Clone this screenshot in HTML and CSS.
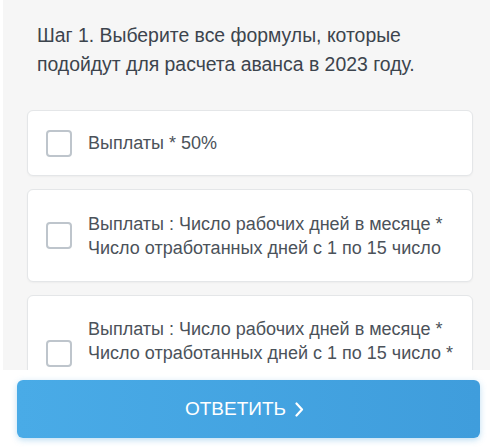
FILE: index.html
```html
<!DOCTYPE html>
<html lang="ru">
<head>
<meta charset="utf-8">
<link rel="stylesheet" href="styles.css">
</head>
<body>
<div class="page">
  <h1 class="question">Шаг 1. Выберите все формулы, которые подойдут для расчета аванса в 2023 году.</h1>
  <div class="options">
    <label class="option">
      <span class="box"></span>
      <span class="text">Выплаты * 50%</span>
    </label>
    <label class="option">
      <span class="box"></span>
      <span class="text">Выплаты : Число рабочих дней в месяце * Число отработанных дней с 1 по 15 число</span>
    </label>
    <label class="option">
      <span class="box"></span>
      <span class="text">Выплаты : Число рабочих дней в месяце * Число отработанных дней с 1 по 15 число * за месяц</span>
    </label>
  </div>
</div>
<div class="footer">
  <button class="submit">ОТВЕТИТЬ <svg class="chev" width="9" height="15" viewBox="0 0 9 15"><path d="M1.5 1.5 L7 7.5 L1.5 13.5" fill="none" stroke="#fff" stroke-width="2.2" stroke-linecap="round" stroke-linejoin="round"/></svg></button>
</div>
</body>
</html>
```
FILE: styles.css
```css
html, body {
  margin: 0;
  padding: 0;
  background: #ffffff;
  font-family: "Liberation Sans", Arial, sans-serif;
  overflow: hidden;
}
.page {
  margin-left: 3px;
  background: #f6f6f6;
  min-height: 447px;
  padding: 21px 17px 0 24px;
  box-sizing: border-box;
}
.question {
  margin: 0 0 31px 10px;
  font-size: 19.4px;
  line-height: 29px;
  font-weight: normal;
  color: #3c444d;
}
.options {
  display: flex;
  flex-direction: column;
  gap: 13px;
}
.option {
  display: flex;
  align-items: center;
  gap: 16px;
  background: #ffffff;
  border: 1px solid #e4e6e8;
  border-radius: 6px;
  box-shadow: 0 1px 2px rgba(0,0,0,0.04);
  padding: 20px 16px 20px 18px;
}
.box {
  flex: none;
  width: 22px;
  height: 23px;
  margin: -2px 0;
  border: 2px solid #bec5cc;
  border-radius: 4px;
  background: #fff;
}
.text {
  font-size: 18px;
  line-height: 24px;
  color: #4b525a;
}
.option:nth-child(2) { padding-top: 21.5px; padding-bottom: 21.5px; }
.option:nth-child(3) { padding-top: 21px; }
.footer {
  position: fixed;
  left: 0;
  right: 0;
  bottom: 0;
  height: 77px;
  background: #ffffff;
  padding: 10px 10px 0 17px;
  box-sizing: border-box;
}
.submit {
  width: 100%;
  height: 58px;
  border: none;
  border-radius: 6px;
  background: linear-gradient(90deg, #49abe7, #3f9ddc);
  box-shadow: 0 2px 6px rgba(66,160,222,0.35);
  color: #ffffff;
  font-family: "Liberation Sans", Arial, sans-serif;
  font-size: 19px;
  display: flex;
  align-items: center;
  justify-content: center;
  gap: 9px;
  padding: 0 8px 0 0;
}
.chev { display: block; margin-top: 1px; }
```
